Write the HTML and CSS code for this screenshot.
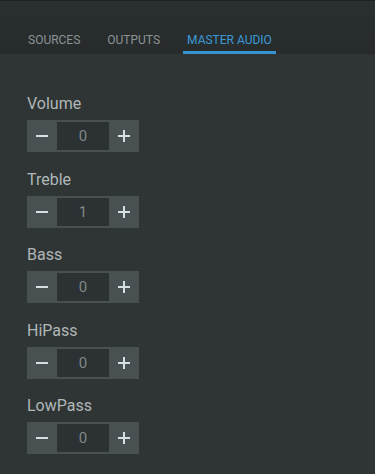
FILE: index.html
```html
<!DOCTYPE html>
<html>
<head>
	<title>master audio</title>
	<link rel="stylesheet" href="styles.css">
</head>
<body>
<div class="header">
  <div class="tabs">
    <div class="tab">Sources</div>
    <div class="tab">Outputs</div>
    <div class="tab active">Master Audio</div>
  </div>
</div>
<div class="content">
  <div class="control">
    <div class="label">Volume</div>
    <div class="stepper"><button class="minus"></button><input type="text" value="0"><button class="plus"></button></div>
  </div>
  <div class="control">
    <div class="label">Treble</div>
    <div class="stepper"><button class="minus"></button><input type="text" value="1"><button class="plus"></button></div>
  </div>
  <div class="control">
    <div class="label">Bass</div>
    <div class="stepper"><button class="minus"></button><input type="text" value="0"><button class="plus"></button></div>
  </div>
  <div class="control">
    <div class="label">HiPass</div>
    <div class="stepper"><button class="minus"></button><input type="text" value="0"><button class="plus"></button></div>
  </div>
  <div class="control">
    <div class="label">LowPass</div>
    <div class="stepper"><button class="minus"></button><input type="text" value="0"><button class="plus"></button></div>
  </div>
</div>
<script type="text/javascript">
var steppers = document.querySelectorAll('.stepper');
for (var i = 0; i < steppers.length; i++) {
  (function(s) {
    var input = s.querySelector('input');
    s.querySelector('.minus').addEventListener('click', function() {
      input.value = (parseInt(input.value, 10) || 0) - 1;
    });
    s.querySelector('.plus').addEventListener('click', function() {
      input.value = (parseInt(input.value, 10) || 0) + 1;
    });
  })(steppers[i]);
}
</script>
</body>
</html>
```

FILE: styles.css
```css
html {
  box-sizing: border-box;
}
*,
*:before,
*:after {
  box-sizing: inherit;
}
body {
  margin: 0;
  min-height: 474px;
  background-color: #2f3535;
  font-family: Roboto, 'Liberation Sans', sans-serif;
  color: #b0b7b8;
}
.header {
  height: 54px;
  border-top: 1px solid #1f2223;
  background: linear-gradient(#2a2f30, #272b2c);
  display: flex;
  align-items: flex-end;
}
.tabs {
  display: flex;
  gap: 19px;
  padding-left: 24px;
}
.tab {
  padding: 0 4px 4px;
  border-bottom: 3px solid transparent;
  font-size: 12px;
  line-height: 14px;
  text-transform: uppercase;
  color: #8c9394;
}
.tab.active {
  color: #3b9ad6;
  border-bottom-color: #3593d2;
}
.content {
  padding: 40px 27px 0;
}
.control {
  margin-bottom: 17.5px;
}
.label {
  font-size: 16px;
  line-height: 20px;
  margin-bottom: 6px;
}
.stepper {
  display: flex;
  align-items: center;
  width: 112px;
  height: 32px;
  background-color: #495052;
}
.stepper button {
  position: relative;
  width: 30px;
  height: 32px;
  padding: 0;
  border: none;
  background: transparent;
  cursor: pointer;
}
.stepper button:before,
.plus:after {
  content: "";
  position: absolute;
  left: 9px;
  top: 15px;
  width: 12px;
  height: 2px;
  background-color: #d3dfe1;
}
.plus:after {
  left: 14px;
  top: 10px;
  width: 2px;
  height: 12px;
}
.stepper input {
  width: 52px;
  height: 28px;
  padding: 0;
  border: none;
  outline: none;
  background-color: #2c3233;
  color: #7f8788;
  font-family: Roboto, 'Liberation Sans', sans-serif;
  font-size: 15px;
  text-align: center;
}
```
